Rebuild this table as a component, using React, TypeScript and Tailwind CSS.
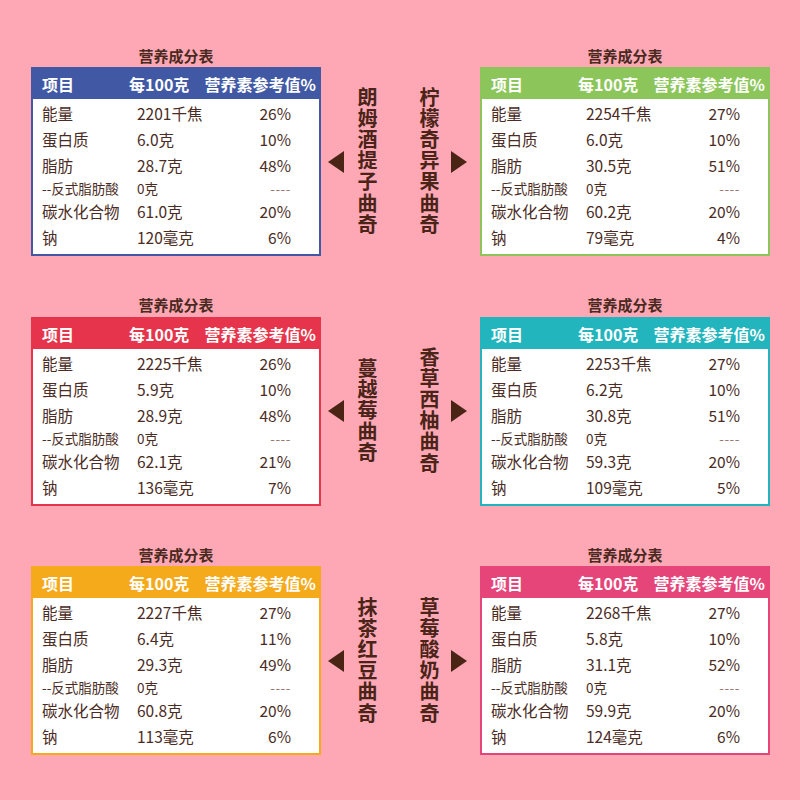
import React from "react";

type Table = {
  color: string;
  vals: [string, string][]; // 6 rows: value, percent
};

const labels = ["能量", "蛋白质", "脂肪", "--反式脂肪酸", "碳水化合物", "钠"];

const rows: { left: Table & { name: string }; right: Table & { name: string } }[] = [
  {
    left: {
      name: "朗姆酒提子曲奇",
      color: "bg-[#4159a5] border-[#4159a5]",
      vals: [["2201千焦", "26%"], ["6.0克", "10%"], ["28.7克", "48%"], ["0克", "----"], ["61.0克", "20%"], ["120毫克", "6%"]],
    },
    right: {
      name: "柠檬奇异果曲奇",
      color: "bg-[#8cc65a] border-[#8cc65a]",
      vals: [["2254千焦", "27%"], ["6.0克", "10%"], ["30.5克", "51%"], ["0克", "----"], ["60.2克", "20%"], ["79毫克", "4%"]],
    },
  },
  {
    left: {
      name: "蔓越莓曲奇",
      color: "bg-[#e5344b] border-[#e5344b]",
      vals: [["2225千焦", "26%"], ["5.9克", "10%"], ["28.9克", "48%"], ["0克", "----"], ["62.1克", "21%"], ["136毫克", "7%"]],
    },
    right: {
      name: "香草西柚曲奇",
      color: "bg-[#23b5bd] border-[#23b5bd]",
      vals: [["2253千焦", "27%"], ["6.2克", "10%"], ["30.8克", "51%"], ["0克", "----"], ["59.3克", "20%"], ["109毫克", "5%"]],
    },
  },
  {
    left: {
      name: "抹茶红豆曲奇",
      color: "bg-[#f5aa1c] border-[#f5aa1c]",
      vals: [["2227千焦", "27%"], ["6.4克", "11%"], ["29.3克", "49%"], ["0克", "----"], ["60.8克", "20%"], ["113毫克", "6%"]],
    },
    right: {
      name: "草莓酸奶曲奇",
      color: "bg-[#e6457a] border-[#e6457a]",
      vals: [["2268千焦", "27%"], ["5.8克", "10%"], ["31.1克", "52%"], ["0克", "----"], ["59.9克", "20%"], ["124毫克", "6%"]],
    },
  },
];

function NutritionTable({ t }: { t: Table }) {
  return (
    <div className={`w-[290px] border-2 ${t.color}`}>
      <div className="flex h-[30px] items-center pl-[9px] pr-[3px] text-[16px] font-bold leading-none text-white">
        <span className="w-[87px]">项目</span>
        <span>每100克</span>
        <span className="ml-auto">营养素参考值%</span>
      </div>
      <div className="bg-white pt-[2px] pb-[3px] text-[#4a2c24]">
        {labels.map((l, i) => {
          const small = i === 3;
          return (
            <div
              key={l}
              className={
                small
                  ? "grid h-[20px] grid-cols-[95px_1fr_auto] items-center pl-[9px] pr-[28px] text-[13.5px] leading-none"
                  : "grid h-[26px] grid-cols-[95px_1fr_auto] items-center pl-[9px] pr-[28px] text-[15.5px] leading-none"
              }
            >
              <span>{l}</span>
              <span>{t.vals[i][0]}</span>
              <span className={small ? "text-[#9a7a70] tracking-[0.5px]" : ""}>{t.vals[i][1]}</span>
            </div>
          );
        })}
      </div>
    </div>
  );
}

function Vertical({ text }: { text: string }) {
  return (
    <div className="w-[22px] text-[20px] font-bold leading-[22px] tracking-[1.2px] text-[#4a2418] [writing-mode:vertical-rl] [text-orientation:upright]">
      {text}
    </div>
  );
}

function Title() {
  return (
    <div className="flex h-[20px] items-center justify-center text-[15px] font-bold leading-none text-[#4a2a20]">
      营养成分表
    </div>
  );
}

export default function App() {
  return (
    <div
      className="flex h-[800px] w-[800px] flex-col gap-[38.5px] bg-[#ffa8b5] pl-[31px] pt-[45px]"
      style={{ fontFamily: '"Noto Sans CJK SC", "Noto Sans", sans-serif' }}
    >
      {rows.map((r, i) => (
        <div key={i} className="grid grid-cols-[290px_159px_290px] grid-rows-[20px_auto] gap-y-[2px]">
          <Title />
          <div />
          <Title />
          <NutritionTable t={r.left} />
          <div className="flex items-center">
            <svg width="16" height="22" viewBox="0 0 16 22" className="ml-[7px]">
              <polygon points="16,0 16,22 0,11" fill="#4a2516" />
            </svg>
            <div className="ml-[12px]">
              <Vertical text={r.left.name} />
            </div>
            <div className="ml-[40px]">
              <Vertical text={r.right.name} />
            </div>
            <svg width="16" height="22" viewBox="0 0 16 22" className="ml-[11px]">
              <polygon points="0,0 16,11 0,22" fill="#4a2516" />
            </svg>
          </div>
          <NutritionTable t={r.right} />
        </div>
      ))}
    </div>
  );
}
